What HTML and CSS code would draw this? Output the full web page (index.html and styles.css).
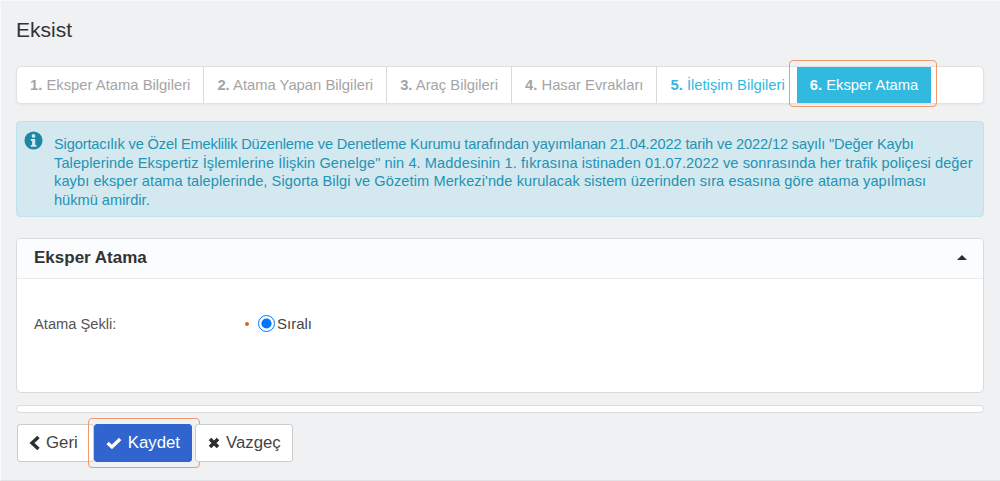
FILE: index.html
```html
<!DOCTYPE html>
<html lang="tr">
<head>
<meta charset="utf-8">
<title>Eksist</title>
<link rel="stylesheet" href="styles.css">
</head>
<body>
<main class="page">
  <h1 class="title">Eksist</h1>
  <nav class="tabs">
    <a class="tab"><b>1.</b> Eksper Atama Bilgileri</a>
    <a class="tab"><b>2.</b> Atama Yapan Bilgileri</a>
    <a class="tab"><b>3.</b> Araç Bilgileri</a>
    <a class="tab"><b>4.</b> Hasar Evrakları</a>
    <a class="tab tab-done"><b>5.</b> İletişim Bilgileri</a>
    <a class="tab tab-active"><b>6.</b> Eksper Atama<span class="mark mark-tab"></span></a>
  </nav>
  <div class="alert">
    <svg class="alert-icon" viewBox="0 0 20 20" aria-hidden="true">
      <circle cx="10" cy="10" r="9.5" fill="#1e87a6"/>
      <circle cx="10" cy="5.2" r="2" fill="#d4e8ef"/>
      <path d="M7.2 8.4h4.6v6.3h1.3v2H7.1v-2h1.4v-4.3H7.2z" fill="#d4e8ef"/>
    </svg>
    <p class="alert-text">
      <span class="line line-tight">Sigortacılık ve Özel Emeklilik Düzenleme ve Denetleme Kurumu tarafından yayımlanan 21.04.2022 tarih ve 2022/12 sayılı "Değer Kaybı</span>
      <span class="line line-loose">Taleplerinde Ekspertiz İşlemlerine İlişkin Genelge" nin 4. Maddesinin 1. fıkrasına istinaden 01.07.2022 ve sonrasında her trafik poliçesi değer</span>
      <span class="line line-loose">kaybı eksper atama taleplerinde, Sigorta Bilgi ve Gözetim Merkezi'nde kurulacak sistem üzerinden sıra esasına göre atama yapılması</span>
      <span class="line">hükmü amirdir.</span>
    </p>
  </div>
  <section class="panel">
    <header class="panel-head">
      <h2 class="panel-title">Eksper Atama</h2>
      <span class="caret"></span>
    </header>
    <div class="panel-body">
      <span class="field-label">Atama Şekli:</span>
      <div class="field-value">
        <span class="dot"></span>
        <label class="radio"><input type="radio" name="sekil" checked>Sıralı</label>
      </div>
    </div>
  </section>
  <div class="panel-empty"></div>
  <div class="actions">
    <button class="btn btn-back" type="button">
      <svg class="btn-icon" viewBox="0 0 12 14" aria-hidden="true"><path d="M9.5 1 3 7l6.5 6" fill="none" stroke="currentColor" stroke-width="3.4"/></svg>Geri
    </button>
    <button class="btn btn-primary" type="button">
      <svg class="btn-icon btn-icon-check" viewBox="0 0 16 12" aria-hidden="true"><path d="M1.6 6 6 10 14.4 2" fill="none" stroke="currentColor" stroke-width="3.4"/></svg>Kaydet<span class="mark mark-btn"></span>
    </button>
    <button class="btn btn-cancel" type="button">
      <svg class="btn-icon btn-icon-x" viewBox="0 0 12 12" aria-hidden="true"><path d="M2 2l8 8M10 2l-8 8" fill="none" stroke="currentColor" stroke-width="3.6"/></svg>Vazgeç
    </button>
  </div>
</main>
</body>
</html>
```

FILE: styles.css
```css
* { box-sizing: border-box; }
html, body { margin: 0; height: 100%; }
body {
  background: #eff1f3;
  color: #333;
  font-family: "Liberation Sans", Arial, sans-serif;
  font-size: 14px;
  overflow: hidden;
}
.page {
  height: 481px;
  padding: 16px 16px 0 15px;
  border-left: 1px solid #f8f9fa;
  border-top: 1px solid #f8f9fa;
  border-bottom: 1px solid #e0e2e4;
}
.title {
  margin: 0 0 23px;
  font-size: 21px;
  font-weight: 400;
  line-height: 26px;
  color: #333;
}
.tabs {
  display: flex;
  height: 38px;
  background: #fff;
  border: 1px solid #dfe1e3;
  border-radius: 5px;
  box-shadow: 0 1px 3px rgba(0,0,0,.05);
}
.tab {
  display: block;
  padding: 0 13px;
  color: #a5a5a5;
  font-size: 14.8px;
  line-height: 36px;
  border-right: 1px solid #d9d9d9;
  white-space: nowrap;
}
.tab b { font-weight: 700; }
.tab-done {
  padding-right: 12px;
  color: #32b9df;
  border-right: 0;
}
.tab-active {
  position: relative;
  background: #31b9e0;
  color: #fff;
  border: 0;
}
.mark {
  position: absolute;
  border: 1px solid #f09a6d;
  border-radius: 4px;
  pointer-events: none;
}
.mark-tab { left: -8px; right: -6px; top: -7px; bottom: -4px; }
.mark-btn { left: -7px; right: -9px; top: -7px; bottom: -7px; }
.alert {
  display: flex;
  gap: 11px;
  height: 96px;
  margin-top: 17px;
  padding: 10px 8px 0 7px;
  background: #d4e8ef;
  border: 1px solid #bfe3ee;
  border-radius: 4px;
}
.alert-icon { flex: none; width: 19px; height: 19px; margin-top: -1px; }
.alert-text {
  margin: 0;
  padding-top: 3px;
  color: #2393b4;
  font-size: 14.6px;
  line-height: 18.5px;
  white-space: nowrap;
}
.line { display: block; }
.line-tight { letter-spacing: -.135px; }
.line-loose { letter-spacing: .08px; }
.panel {
  height: 155px;
  margin-top: 21px;
  background: #fff;
  border: 1px solid #d8dadc;
  border-radius: 5px;
  overflow: hidden;
}
.panel-head {
  display: flex;
  align-items: center;
  justify-content: space-between;
  height: 40px;
  padding: 0 17px 2px;
  background: #fbfcfe;
  border-bottom: 1px solid #e9ebed;
}
.panel-title {
  margin: 0;
  font-size: 17px;
  font-weight: 700;
  color: #333;
}
.caret {
  width: 0;
  height: 0;
  margin-right: -1px;
  border-left: 5px solid transparent;
  border-right: 5px solid transparent;
  border-bottom: 5px solid #2b2b2b;
}
.panel-body {
  display: flex;
  align-items: center;
  padding: 36px 17px 0;
}
.field-label { width: 211px; color: #555; font-size: 14.7px; }
.field-value { display: flex; align-items: center; }
.dot {
  width: 4px;
  height: 4px;
  margin-right: 9px;
  border-radius: 50%;
  background: #d2691e;
}
.radio { display: flex; align-items: center; color: #444; font-size: 15px; }
.radio input {
  width: 17px;
  height: 17px;
  margin: 0 2px 0 0;
  accent-color: #0075ff;
}
.panel-empty {
  height: 8px;
  margin-top: 12px;
  background: #fff;
  border: 1px solid #d8dadc;
  border-radius: 4px;
}
.actions { display: flex; margin: 11px 0 0 1px; }
.btn {
  position: relative;
  display: flex;
  align-items: center;
  height: 38px;
  margin: 0;
  padding: 0 11px;
  background: #fff;
  border: 1px solid #ccc;
  border-radius: 3px;
  color: #444;
  font: 16.8px "Liberation Sans", Arial, sans-serif;
}
.btn-icon { width: 12px; height: 14px; margin-right: 5px; color: #2d2d2d; }
.btn-back { width: 77px; }
.btn-primary {
  width: 98px;
  background: #3164cf;
  border-color: #3164cf;
  color: #fff;
}
.btn-icon-check { width: 16px; height: 12px; margin-right: 6px; color: #fff; }
.btn-cancel { margin-left: 3px; padding: 0 11px 0 12px; }
.btn-icon-x { width: 12px; height: 12px; margin-right: 6px; }
```
